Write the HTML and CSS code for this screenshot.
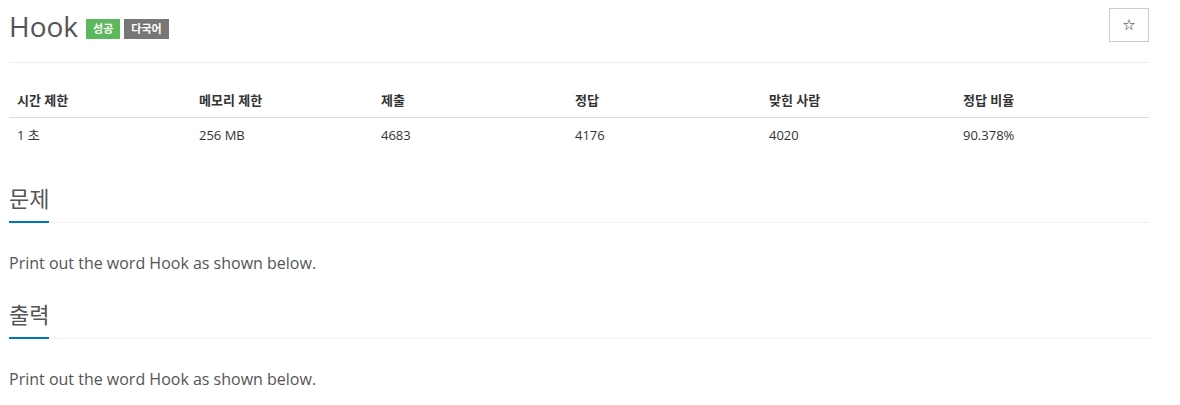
FILE: index.html
```html
<!DOCTYPE html>
<html lang="ko">
<head>
    <meta charset="UTF-8">
    <meta name="viewport" content="width=device-width, initial-scale=1.0">
    <title>Hook</title>
    <link rel="stylesheet" href="styles.css">
</head>
<body>
    <div class="container">
        <div class="page-header">
            <h1 class="title">
                <span class="title-text">Hook</span>
                <span class="label label-success">성공</span>
                <span class="label label-default">다국어</span>
            </h1>
            <button class="btn-star" type="button">&#9734;</button>
        </div>

        <table class="problem-info">
            <thead>
                <tr>
                    <th class="col-a">시간 제한</th>
                    <th class="col-a">메모리 제한</th>
                    <th class="col-b">제출</th>
                    <th class="col-b">정답</th>
                    <th class="col-b">맞힌 사람</th>
                    <th>정답 비율</th>
                </tr>
            </thead>
            <tbody>
                <tr>
                    <td>1 초</td>
                    <td>256 MB</td>
                    <td>4683</td>
                    <td>4176</td>
                    <td>4020</td>
                    <td>90.378%</td>
                </tr>
            </tbody>
        </table>

        <section class="problem-section">
            <div class="headline">
                <h2><span>문제</span></h2>
            </div>
            <p class="problem-text">Print out the word Hook as shown below.</p>
        </section>

        <section class="problem-section">
            <div class="headline">
                <h2><span>출력</span></h2>
            </div>
            <p class="problem-text">Print out the word Hook as shown below.</p>
        </section>
    </div>
</body>
</html>
```

FILE: styles.css
```css
body {
    margin: 0;
    font-family: "Open Sans", "Noto Sans CJK KR", sans-serif;
    font-size: 14px;
    color: #333;
    background-color: #fff;
}

.container {
    width: 1140px;
    padding-left: 9px;
}

.page-header {
    display: flex;
    justify-content: space-between;
    align-items: flex-start;
    padding-top: 8px;
    padding-bottom: 18px;
    border-bottom: 1px solid #eee;
}

.title {
    margin: 0;
    display: flex;
    align-items: center;
    font-weight: 400;
    font-size: 28px;
    line-height: 36px;
    color: #555;
}

.title-text {
    margin-right: 8px;
}

.label {
    display: inline-block;
    padding: 0 7px;
    height: 20px;
    line-height: 20px;
    margin-top: 6px;
    margin-right: 4px;
    font-size: 11px;
    font-weight: 700;
    color: #fff;
}

.label-success {
    background-color: #5cb85c;
}

.label-default {
    background-color: #777;
}

.btn-star {
    width: 40px;
    height: 34px;
    background-color: #fff;
    border: 1px solid #ccc;
    font-family: "DejaVu Sans", sans-serif;
    font-size: 15px;
    color: #222;
    cursor: pointer;
}

.problem-info {
    width: 1140px;
    margin-top: 20px;
    margin-bottom: 31px;
    border-collapse: collapse;
    font-size: 13px;
}

.problem-info th,
.problem-info td {
    text-align: left;
    padding: 8px;
    line-height: 18px;
}

.problem-info th {
    font-weight: 700;
    color: #333;
    border-bottom: 1px solid #ddd;
}

.problem-info td {
    color: #333;
}

.col-a {
    width: 166px;
}

.col-b {
    width: 178px;
}

.problem-section {
    margin-top: 24px;
}

.headline {
    border-bottom: 1px dotted #e4e4e4;
    margin-bottom: 28px;
}

.headline h2 {
    margin: 0;
    font-size: 22px;
    font-weight: 400;
    line-height: 30px;
    color: #555;
}

.headline h2 span {
    display: inline-block;
    padding-bottom: 8px;
    margin-bottom: -1px;
    border-bottom: 2px solid #0076c0;
}

.problem-text {
    margin: 0;
    font-size: 16px;
    line-height: 24px;
    color: #555;
}
```
